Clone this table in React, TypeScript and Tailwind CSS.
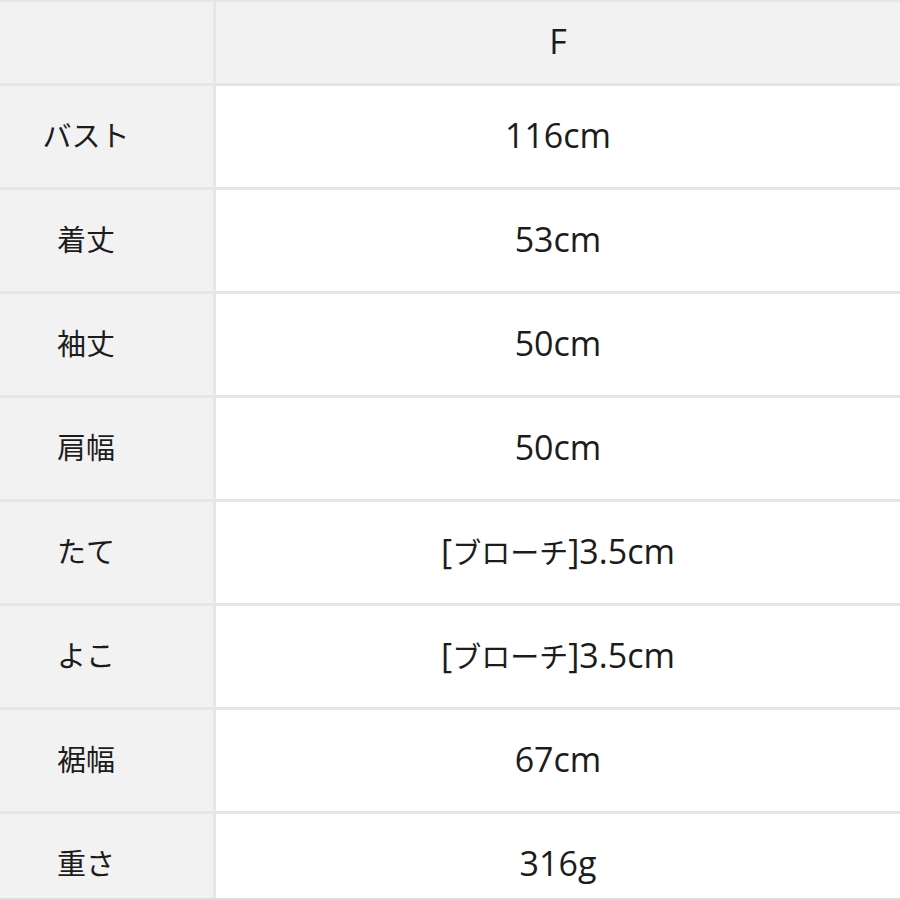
import React from "react";

const rows: [string, string][] = [
  ["バスト", "116cm"],
  ["着丈", "53cm"],
  ["袖丈", "50cm"],
  ["肩幅", "50cm"],
  ["たて", "[ブローチ]3.5cm"],
  ["よこ", "[ブローチ]3.5cm"],
  ["裾幅", "67cm"],
  ["重さ", "316g"],
];

function Value({ text }: { text: string }) {
  const parts = text.split(/([\u3040-\u30ff\u4e00-\u9fff]+)/).filter(Boolean);
  return (
    <span className="leading-none whitespace-nowrap">
      {parts.map((p, i) =>
        /[\u3040-\u30ff\u4e00-\u9fff]/.test(p) ? (
          <span key={i} className="text-[29px] [font-family:'Noto_Sans_CJK_JP',sans-serif]">
            {p}
          </span>
        ) : (
          <span key={i} className="text-[34px] font-normal [font-family:'Open_Sans','Noto_Sans_CJK_JP',sans-serif]">
            {p}
          </span>
        )
      )}
    </span>
  );
}

export default function App() {
  return (
    <div className="w-[900px] h-[900px] overflow-hidden bg-[#e6e6e6] border-b-2 border-[#dcdcdc]">
      <div className="grid grid-cols-[213px_1fr] gap-[3px] pt-[2px] bg-[#e6e6e6] text-[#1c1c1c] [font-family:'Noto_Sans_CJK_JP',sans-serif]">
        <div className="h-[81px] bg-[#f2f2f2]" />
        <div className="h-[81px] bg-[#f2f2f2] flex items-center justify-center pb-[4px]">
          <Value text="F" />
        </div>
        {rows.map(([k, v]) => (
          <React.Fragment key={k}>
            <div className="h-[101px] bg-[#f2f2f2] flex items-center justify-center pr-[41px] pb-[4px] text-[29px]">
              {k}
            </div>
            <div className="h-[101px] bg-white flex items-center justify-center pb-[4px]">
              <Value text={v} />
            </div>
          </React.Fragment>
        ))}
      </div>
    </div>
  );
}
